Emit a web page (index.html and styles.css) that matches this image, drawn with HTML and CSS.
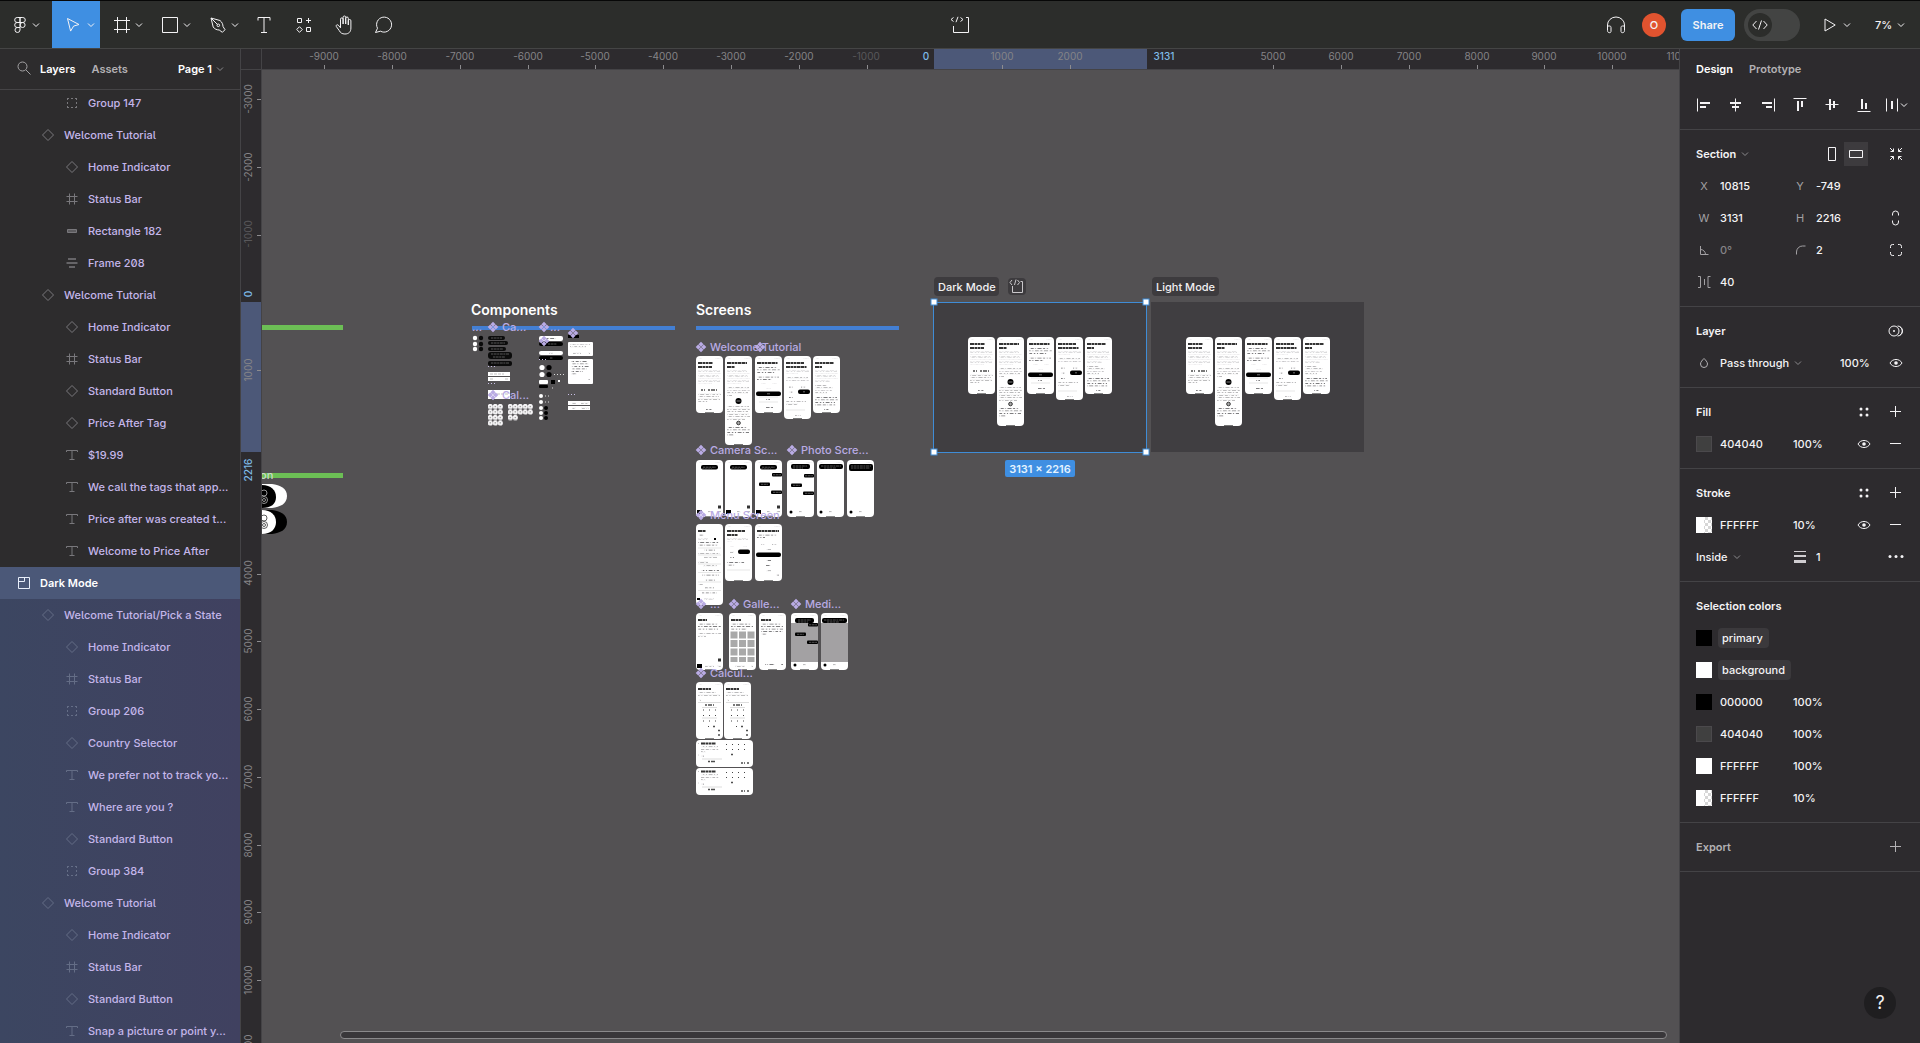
FILE: index.html
```html
<!DOCTYPE html>
<html lang="en">
<head>
<meta charset="utf-8">
<title>Price After – design file</title>
<link rel="stylesheet" href="styles.css">
</head>
<body>
<svg class="sprite" aria-hidden="true">
  <defs>
    <symbol id="chevron" viewBox="0 0 8 8"><path d="M1 2.5l3 3 3-3"/></symbol>
    <symbol id="figma" viewBox="0 0 16 20"><path d="M8 2.500H5.200a2.500 2.500 0 0 0 0 5H8zM8 2.500h2.800a2.500 2.500 0 0 1 0 5H8zM8 7.500H5.200a2.500 2.500 0 0 0 0 5H8zM8 12.500H5.200a2.500 2.500 0 1 0 2.800 2.500z"/><circle cx="10.600" cy="10" r="2.500"/></symbol>
    <symbol id="move" viewBox="0 0 16 16"><path d="M1.500 1.500l11.500 6-5.400 1.600-3 5z"/></symbol>
    <symbol id="frame" viewBox="0 0 16 16"><path d="M3.500 0v16M12.500 0v16M0 3.500h16M0 12.500h16"/></symbol>
    <symbol id="rect" viewBox="0 0 16 16"><path d="M.5.5h15v15H.5z"/></symbol>
    <symbol id="pen" viewBox="0 0 16 16"><path d="M1 1l9 2.500c2 1.500 3 4 3 6l2 3.200-2.600 2.600L9.200 13c-2.500 0-4.800-1.200-6-3zM1 1l6.500 6.500"/><circle cx="8.300" cy="8.300" r="1.300"/></symbol>
    <symbol id="text" viewBox="0 0 16 18"><path d="M2 4.500V1.500h12v3M8 1.500v15M5 16.500h6"/></symbol>
    <symbol id="resources" viewBox="0 0 16 16"><path d="M1.500 1.500h4v4h-4zM10.500 10.500h4v4h-4zM12.500 1v5M10 3.500h5M3.500 9.700l2.800 2.800-2.800 2.800L.7 12.500z"/></symbol>
    <symbol id="hand" viewBox="0 0 18 20"><path d="M5.500 11V4.200a1.300 1.300 0 0 1 2.600 0V9V2.300a1.300 1.300 0 0 1 2.600 0V9V3.300a1.300 1.300 0 0 1 2.600 0V10V5.800a1.300 1.300 0 0 1 2.600 0V13c0 4-2.300 6-6 6-3 0-4.500-1.200-5.700-3.500L1.300 11.500c-.6-1.500 1-2.300 2-1.300L5.500 12.800z"/></symbol>
    <symbol id="comment" viewBox="0 0 18 18"><path d="M.5 16.500l2-4.300a7.500 7.500 0 1 1 3 3z"/></symbol>
    <symbol id="devbox" viewBox="0 0 20 18"><path d="M3.500 10v6.500h15v-15H16M3.500 1.500l-2.500 2 2.500 2M10.500 1.500l2.500 2-2.500 2M8 .8L6 6.200"/></symbol>
    <symbol id="headphones" viewBox="0 0 20 18"><path d="M1.500 10.500V9a8.500 8 0 0 1 17 0v1.500M1.500 10h2c1 0 1.500.5 1.500 1.500v3.700c0 1-.5 1.500-1.300 1.500-1.400 0-2.200-.8-2.200-2.200zM18.500 10h-2c-1 0-1.500.5-1.500 1.500v3.700c0 1 .5 1.500 1.300 1.500 1.400 0 2.200-.8 2.200-2.200z"/></symbol>
    <symbol id="code" viewBox="0 0 16 10"><path d="M4.500 1L.8 5l3.700 4M11.500 1l3.700 4-3.700 4M9.500.5l-3 9"/></symbol>
    <symbol id="play" viewBox="0 0 12 14"><path d="M1 1l10.200 6L1 13z"/></symbol>
    <symbol id="search" viewBox="0 0 14 14"><circle cx="5.500" cy="5.500" r="4.500"/><path d="M9 9l4.500 4.500"/></symbol>
    <symbol id="l-group" viewBox="0 0 16 16"><path stroke-dasharray="2 2" d="M3 3.500h11M3 12.500h11M3.500 3v11M12.500 3v11"/></symbol>
    <symbol id="l-diamond" viewBox="0 0 16 16"><path d="M8 2.500L13.500 8 8 13.500 2.500 8z"/></symbol>
    <symbol id="l-frame" viewBox="0 0 16 16"><path d="M5.500 2.500v11M10.500 2.500v11M2.500 5.500h11M2.500 10.500h11"/></symbol>
    <symbol id="l-rect" viewBox="0 0 16 16"><path fill="#5c5b5e" d="M3.500 6.500h9v3h-9z"/></symbol>
    <symbol id="l-auto" viewBox="0 0 16 16"><path stroke-width="1.500" d="M4 4h8M2.500 8h11M5 12h6"/></symbol>
    <symbol id="l-text" viewBox="0 0 16 16"><path d="M2.500 5V3.500h11V5M8 3.500v9M5.500 12.500h5"/></symbol>
    <symbol id="l-section" viewBox="0 0 16 16"><path d="M2.500 2.500h11v11h-11zM8.500 2.500v4h-6"/></symbol>
    <symbol id="a-left" viewBox="0 0 16 16"><path d="M1.500 1.500v13"/><path stroke-width="2" d="M4 6h10M4 10h6"/></symbol>
    <symbol id="a-hc" viewBox="0 0 16 16"><path d="M7.500 1.500v13"/><path stroke-width="2" d="M2 6h11M4 10h7"/></symbol>
    <symbol id="a-right" viewBox="0 0 16 16"><path d="M14.500 1.500v13"/><path stroke-width="2" d="M2 6h10M6 10h6"/></symbol>
    <symbol id="a-top" viewBox="0 0 16 16"><path d="M1.500 1.500h13"/><path stroke-width="2" d="M6 4v10M10 4v6"/></symbol>
    <symbol id="a-vc" viewBox="0 0 16 16"><path d="M1.500 7.500h13"/><path stroke-width="2" d="M6 2v11M10 4v7"/></symbol>
    <symbol id="a-bottom" viewBox="0 0 16 16"><path d="M1.500 14.500h13"/><path stroke-width="2" d="M6 2v10M10 6v6"/></symbol>
    <symbol id="a-dist" viewBox="0 0 14 16"><path d="M1.500 1.500v13M12.500 1.500v13"/><path stroke-width="2" d="M7 4v8"/></symbol>
    <symbol id="portrait" viewBox="0 0 16 16"><path d="M4.500 1.500h7v13h-7z"/></symbol>
    <symbol id="landscape" viewBox="0 0 16 16"><path d="M1.500 4.500h13v7h-13z"/></symbol>
    <symbol id="collapse" viewBox="0 0 16 16"><path d="M2 2l3.500 3.500M2.500 5.500h3v-3M14 2l-3.500 3.500M13.500 5.500h-3v-3M2 14l3.500-3.500M2.500 10.500h3v3M14 14l-3.500-3.500M13.500 10.500h-3v3"/></symbol>
    <symbol id="link" viewBox="0 0 16 16"><path d="M4.500 5.500V4a3 3 0 0 1 6 0v1.500M4.500 10.500V12a3 3 0 0 0 6 0v-1.500"/></symbol>
    <symbol id="corners" viewBox="0 0 16 16"><path d="M2.500 6V4.500a2 2 0 0 1 2-2H6M10 2.500h1.500a2 2 0 0 1 2 2V6M13.500 10v1.500a2 2 0 0 1-2 2H10M6 13.500H4.500a2 2 0 0 1-2-2V10"/></symbol>
    <symbol id="angle" viewBox="0 0 16 16"><path d="M4.500 4v8.500h8M4.500 7.500a5 5 0 0 1 5 5"/></symbol>
    <symbol id="radius" viewBox="0 0 16 16"><path d="M4.500 12.500V10a6 6 0 0 1 6-6h3"/></symbol>
    <symbol id="spacing" viewBox="0 0 16 16"><path d="M2 2.500h2.500v11H2M14.500 2.500H12v11h2.500M8.500 5v6"/></symbol>
    <symbol id="mask" viewBox="0 0 16 16"><circle cx="6" cy="8" r="5"/><path d="M9.500 3a5 5 0 0 1 0 10M11.500 3.500a5 5 0 0 1 0 9"/><circle class="solid" cx="6" cy="8" r="1"/></symbol>
    <symbol id="drop" viewBox="0 0 16 16"><path d="M8 3.500C6.500 5 4.500 7 4.500 9a3.500 3.500 0 0 0 7 0c0-2-2-4-3.500-5.500z"/></symbol>
    <symbol id="eye" viewBox="0 0 16 16"><path d="M2 8c2.500-4.700 9.500-4.700 12 0-2.500 4.700-9.500 4.700-12 0z"/><circle class="solid" cx="8" cy="8" r="1.800"/></symbol>
    <symbol id="styles" viewBox="0 0 16 16"><g class="solid"><circle cx="5" cy="5" r="1.500"/><circle cx="11" cy="5" r="1.500"/><circle cx="5" cy="11" r="1.500"/><circle cx="11" cy="11" r="1.500"/></g></symbol>
    <symbol id="plus" viewBox="0 0 16 16"><path d="M7.500 2v11M2 7.500h11"/></symbol>
    <symbol id="minus" viewBox="0 0 16 16"><path d="M2 7.500h11"/></symbol>
    <symbol id="weight" viewBox="0 0 16 16"><path d="M2 2.500h12"/><path stroke-width="2" d="M2 7h12"/><path stroke-width="3" d="M2 12.500h12"/></symbol>
    <symbol id="more" viewBox="0 0 16 16"><g class="solid"><circle cx="2" cy="7.500" r="1.500"/><circle cx="8" cy="7.500" r="1.500"/><circle cx="14" cy="7.500" r="1.500"/></g></symbol>

    <!-- rows of word-sized marks, used as paint for miniature copy -->
    <pattern id="prose" width="26" height="10" patternUnits="userSpaceOnUse">
      <g fill="#5f5e61"><path d="M0 0h2.500v2.500H0zM3.200 0h4v2.500h-4zM7.900 0h1.500v2.500H7.900zM10 0h5v2.500h-5zM15.600 0h3v2.500h-3zM19.200 0h2v2.500h-2zM21.800 0h4v2.500h-4z"/><path d="M0 2.500h4.200V5H0zM4.900 2.500h2V5h-2zM7.500 2.500h4.700V5H7.500zM12.900 2.500h3V5h-3zM16.500 2.500h5V5h-5zM22.200 2.500h3V5h-3z"/><path d="M0 5h1.200v2.500H0zM1.900 5h3.700v2.500H1.900zM6.300 5h2.500v2.500H6.300zM9.500 5h2v2.500h-2zM12.200 5h4.800v2.500h-4.800zM17.600 5h2v2.500h-2zM20.300 5h5.200v2.500h-5.200z"/><path d="M0 7.500h3V10H0zM3.700 7.500h5V10h-5zM9.300 7.500h4V10h-4zM14 7.500h1.300V10H14zM16 7.500h3.500V10H16zM20.100 7.500h2.500V10h-2.500zM23.300 7.500h2V10h-2z"/></g>
    </pattern>
    <g id="comp"><path fill="#b9abe4" d="M5-.3l2.500 2.500L5 4.700 2.500 2.200zM5 5.300l2.500 2.500L5 10.300 2.500 7.800zM2.200 2.500L4.700 5 2.200 7.500-.3 5zM7.800 2.500L10.300 5 7.800 7.500 5.300 5z"/></g>
    <g id="base"><rect width="27" height="57" rx="4" fill="#fff"/><path class="gk" d="M3 2.500h3M19 2.500h6"/><path stroke="#888" d="M9 56.500h9"/></g>
    <g id="s-welcome"><use href="#base"/><path class="hd" d="M2 7h15M2 11h14"/><path class="gk" d="M2 15h22M2 17.500h23M2 20h21M2 22.500h23M2 25h22M2 27.500h14M2 38h23M2 40.500h21M2 43h22M2 45.500h10M10 53.500h6"/><path class="dk" d="M5 34h4M12 34h9"/></g>
    <g id="s-how"><rect width="27" height="89" rx="4" fill="#fff"/><path class="hd" d="M2 7h20M2 11h8"/><path class="gk" d="M3 2.500h3M19 2.500h6M2 15h20M2 17.500h23M2 20h21M2 22.500h23M2 25h22M2 27.500h14M2 32h22M2 34.500h23M2 37h21M2 39.500h5M2 50.500h22M2 53h23M2 55.500h21M2 58h22M2 60.500h23M2 63h18M2 71.500h20M2 74h23M2 76.500h22M2 79h7"/><circle cx="13.500" cy="45" r="3"/><circle cx="13.500" cy="67" r="1.800" fill="#aaa" stroke="#333"/><path stroke="#bbb" stroke-width=".7" d="M11.500 45h4"/><path stroke="#777" d="M9 88.500h9"/></g>
    <g id="s-where"><use href="#base"/><path class="hd" d="M2 7h21"/><path class="gk" d="M2 11.500h20M2 14h23M2 16.500h18M2 21h22M2 23.500h15M6 27.500h5M17 27.500h5M11 32.500h5M11 43.500h4M11 51.500h7"/><path stroke="#ccc" stroke-width=".5" d="M4 41h19M4 46h19"/><rect x="1" y="35.500" width="25" height="4.500" rx="2"/><path stroke="#999" stroke-width=".7" d="M12 37.800h3"/></g>
    <g id="s-tip"><rect width="27" height="63" rx="4" fill="#fff"/><path class="hd" d="M2 7h18M2 11h21"/><path class="gk" d="M3 2.500h3M19 2.500h6M2 15h23M2 17.500h12M2 22h22M2 24.500h23M5 31h4M17 31h5M5 36h4M5 41.500h4M2 45.500h20M2 48h12M11 59.500h6"/><path stroke="#ccc" stroke-width=".5" d="M2 54h19"/><rect x="14" y="33.500" width="12" height="4.500" rx="2"/><path stroke="#999" stroke-width=".7" d="M19 35.800h2"/><path stroke="#777" d="M9 62.500h9"/></g>
    <g id="s-ready"><use href="#base"/><path class="hd" d="M2 7h19M2 11h7"/><path class="gk" d="M2 15h22M2 17.500h23M2 20h21M2 22.500h23M2 25h15M2 29.500h12M2 32h18M2 34.500h17M2 37h12M2 41.500h22M2 44h23M2 46.500h20M2 49h21M11 53.500h5"/></g>
    <g id="s-cam"><use href="#base"/><rect x="5" y="5" width="17" height="4.500" rx="2"/><path class="lt" d="M7 7.200h13M6 9h10"/><path d="M1 50h5v4H1z"/><path class="gk" d="M12 52h4M21 52h4"/><path fill="#333" d="M22 45.500h3v3h-3z"/></g>
    <g id="s-photo"><use href="#base"/><circle cx="4" cy="52" r="1.500"/><path class="gk" d="M12 52h3"/></g>
    <g id="tags"><rect x="17" y="13" width="10" height="3.500" rx="1"/><rect x="4" y="22.500" width="11" height="3.500" rx="1"/><rect x="16" y="30.500" width="11" height="3.500" rx="1"/><path class="lt" d="M18 14.800h8M6 24.300h7M18 32.300h8"/></g>
    <g id="s-land"><rect width="57" height="27" rx="4" fill="#fff"/><path class="hd" d="M5 3.500h15"/><path class="gk" d="M5 7h17M5 9.500h18M5 12h5M5 16h3M2 3h1M2 15h1"/><path class="keys" d="M30 4.500h24M30 9.500h24"/><path class="dk" d="M12 21.500h8M35 14.500h2M45 23h4M51 23h3"/><path stroke="#bbb" stroke-width=".5" d="M6 19h20"/></g>
    <g id="s-calc"><use href="#base"/><path class="hd" d="M2 7h13"/><path class="gk" d="M2 10.500h18M2 13h22M3 18h2"/><path class="keys" d="M7 28h14M7 33.500h14M7 39h14M12 44.500h2"/><path stroke="#bbb" stroke-width=".5" d="M2 20.500h23M6 25.500h15M6 36h15"/><path class="dk" d="M9 23h9M17 44.500h2M22 48.500h3M22 53h3"/></g>
    <g id="flow"><use href="#s-welcome"/><use href="#s-how" x="29"/><use href="#s-where" x="59"/><use href="#s-tip" x="88"/><use href="#s-ready" x="117"/></g>
    <pattern id="dots" width="5" height="5.500" patternUnits="userSpaceOnUse"><circle cx="2.300" cy="2.500" r="2.100" fill="#fff"/><path stroke="#555" stroke-width=".8" d="M1.500 2.500h1.600"/></pattern>
  </defs>
</svg>

<div class="app">
  <header class="toolbar">
    <nav class="tools" aria-label="Tools">
      <button class="tool menu" aria-label="Main menu"><svg class="i16x20"><use href="#figma"/></svg><svg class="chev"><use href="#chevron"/></svg></button>
      <button class="tool split active" aria-label="Move"><svg class="i16"><use href="#move"/></svg><svg class="chev"><use href="#chevron"/></svg></button>
      <button class="tool split" aria-label="Frame"><svg class="i16"><use href="#frame"/></svg><svg class="chev"><use href="#chevron"/></svg></button>
      <button class="tool split" aria-label="Rectangle"><svg class="i16"><use href="#rect"/></svg><svg class="chev"><use href="#chevron"/></svg></button>
      <button class="tool split" aria-label="Pen"><svg class="i16"><use href="#pen"/></svg><svg class="chev"><use href="#chevron"/></svg></button>
      <button class="tool" aria-label="Text"><svg class="i16x18"><use href="#text"/></svg></button>
      <button class="tool" aria-label="Resources"><svg class="i16"><use href="#resources"/></svg></button>
      <button class="tool" aria-label="Hand"><svg class="i18x20"><use href="#hand"/></svg></button>
      <button class="tool" aria-label="Comment"><svg class="i18"><use href="#comment"/></svg></button>
    </nav>
    <button class="tool dev" aria-label="Ready for dev"><svg class="i20x18"><use href="#devbox"/></svg></button>
    <div class="actions">
      <button class="tool audio" aria-label="Audio"><svg class="i20x18"><use href="#headphones"/></svg></button>
      <span class="avatar">O</span>
      <button class="share">Share</button>
      <label class="switch"><input type="checkbox" aria-label="Dev Mode"><span class="knob"><svg class="i16x10"><use href="#code"/></svg></span></label>
      <button class="tool present" aria-label="Present"><svg class="i12x14"><use href="#play"/></svg><svg class="chev"><use href="#chevron"/></svg></button>
      <button class="tool zoom">7%<svg class="chev"><use href="#chevron"/></svg></button>
    </div>
  </header>

  <aside class="layers">
    <div class="layers-head">
      <button class="find" aria-label="Find"><svg class="i14"><use href="#search"/></svg></button>
      <button class="tab on">Layers</button>
      <button class="tab">Assets</button>
      <button class="tab on page">Page 1<svg class="chev dim"><use href="#chevron"/></svg></button>
    </div>
    <div class="scroll">
      <ul class="tree">
        <li class="d2"><svg><use href="#l-group"/></svg>Group 147</li>
        <li class="d1"><svg><use href="#l-diamond"/></svg>Welcome Tutorial</li>
        <li class="d2"><svg><use href="#l-diamond"/></svg>Home Indicator</li>
        <li class="d2"><svg><use href="#l-frame"/></svg>Status Bar</li>
        <li class="d2"><svg><use href="#l-rect"/></svg>Rectangle 182</li>
        <li class="d2"><svg><use href="#l-auto"/></svg>Frame 208</li>
        <li class="d1"><svg><use href="#l-diamond"/></svg>Welcome Tutorial</li>
        <li class="d2"><svg><use href="#l-diamond"/></svg>Home Indicator</li>
        <li class="d2"><svg><use href="#l-frame"/></svg>Status Bar</li>
        <li class="d2"><svg><use href="#l-diamond"/></svg>Standard Button</li>
        <li class="d2"><svg><use href="#l-diamond"/></svg>Price After Tag</li>
        <li class="d2"><svg><use href="#l-text"/></svg>$19.99</li>
        <li class="d2"><svg><use href="#l-text"/></svg>We call the tags that app...</li>
        <li class="d2"><svg><use href="#l-text"/></svg>Price after was created t...</li>
        <li class="d2"><svg><use href="#l-text"/></svg>Welcome to Price After</li>
        <li class="d0"><svg><use href="#l-section"/></svg>Dark Mode</li>
        <li class="d1 in"><svg><use href="#l-diamond"/></svg>Welcome Tutorial/Pick a State</li>
        <li class="d2 in"><svg><use href="#l-diamond"/></svg>Home Indicator</li>
        <li class="d2 in"><svg><use href="#l-frame"/></svg>Status Bar</li>
        <li class="d2 in"><svg><use href="#l-group"/></svg>Group 206</li>
        <li class="d2 in"><svg><use href="#l-diamond"/></svg>Country Selector</li>
        <li class="d2 in"><svg><use href="#l-text"/></svg>We prefer not to track yo...</li>
        <li class="d2 in"><svg><use href="#l-text"/></svg>Where are you ?</li>
        <li class="d2 in"><svg><use href="#l-diamond"/></svg>Standard Button</li>
        <li class="d2 in"><svg><use href="#l-group"/></svg>Group 384</li>
        <li class="d1 in"><svg><use href="#l-diamond"/></svg>Welcome Tutorial</li>
        <li class="d2 in"><svg><use href="#l-diamond"/></svg>Home Indicator</li>
        <li class="d2 in"><svg><use href="#l-frame"/></svg>Status Bar</li>
        <li class="d2 in"><svg><use href="#l-diamond"/></svg>Standard Button</li>
        <li class="d2 in"><svg><use href="#l-text"/></svg>Snap a picture or point y...</li>
      </ul>
    </div>
  </aside>

  <main class="stage">
    <div class="corner"></div>
    <svg class="ruler-x">
      <rect class="band" x="672" width="213" height="20"/>
      <g class="ticks"><path d="M62.500 16v4M130.500 16v4M198.500 16v4M266.500 16v4M333.500 16v4M401.500 16v4M469.500 16v4M537.500 16v4M605.500 16v4M740.500 16v4M808.500 16v4M1011.500 16v4M1079.500 16v4M1147.500 16v4M1215.500 16v4M1282.500 16v4M1350.500 16v4"/></g>
      <g class="nums">
        <text x="62" y="11">-9000</text><text x="130" y="11">-8000</text><text x="198" y="11">-7000</text><text x="266" y="11">-6000</text><text x="333" y="11">-5000</text><text x="401" y="11">-4000</text><text x="469" y="11">-3000</text><text x="537" y="11">-2000</text><text class="faint" x="604" y="11">-1000</text>
        <text class="sel" x="664" y="11">0</text><text x="740" y="11">1000</text><text x="808" y="11">2000</text><text class="sel" x="902" y="11">3131</text>
        <text x="1011" y="11">5000</text><text x="1079" y="11">6000</text><text x="1147" y="11">7000</text><text x="1215" y="11">8000</text><text x="1282" y="11">9000</text><text x="1350" y="11">10000</text><text x="1418" y="11">11000</text>
      </g>
    </svg>
    <svg class="ruler-y">
      <rect class="band" y="232" width="20" height="150"/>
      <g class="ticks"><path d="M16 29.500h4M16 97.500h4M16 165.500h4M16 300.500h4M16 504.500h4M16 571.500h4M16 639.500h4M16 707.500h4M16 775.500h4M16 842.500h4M16 910.500h4"/></g>
      <g class="nums">
        <text transform="translate(11 29) rotate(-90)">-3000</text><text transform="translate(11 97) rotate(-90)">-2000</text><text class="faint" transform="translate(11 164) rotate(-90)">-1000</text>
        <text class="sel" transform="translate(11 224) rotate(-90)">0</text><text transform="translate(11 300) rotate(-90)">1000</text><text class="sel" transform="translate(11 400) rotate(-90)">2216</text>
        <text transform="translate(11 503) rotate(-90)">4000</text><text transform="translate(11 571) rotate(-90)">5000</text><text transform="translate(11 639) rotate(-90)">6000</text><text transform="translate(11 707) rotate(-90)">7000</text><text transform="translate(11 775) rotate(-90)">8000</text><text transform="translate(11 842) rotate(-90)">9000</text><text transform="translate(11 910) rotate(-90)">10000</text><text transform="translate(11 978) rotate(-90)">11000</text>
      </g>
    </svg>
    <div class="canvas">
      <svg class="world">
        <g transform="translate(-262 -70)">
          <path fill="#6cbf55" d="M262 325h81v5h-81zM262 473h81v5h-81z"/>
          <text class="name pale" x="260" y="479">on</text>
          <g>
            <path fill="#fff" d="M262 484h10c8 1 15 4 15 12s-7 11-15 12h-10z"/><path d="M262 485c9 0 14 5 14 12s-5 11-14 11z"/>
            <path d="M262 510h10c8 1 15 4 15 12s-7 11-15 12h-10z"/><path fill="#fff" d="M262 510c9 0 14 5 14 12s-5 12-14 12z"/>
            <g fill="none" stroke="#bbb" stroke-width=".8"><circle cx="264" cy="493" r="3"/><circle cx="264" cy="500" r="3.500"/><circle cx="264" cy="500" r="1.500"/></g>
            <g fill="none" stroke="#333" stroke-width=".8"><circle cx="264" cy="518" r="3"/><circle cx="264" cy="525" r="3.500"/><circle cx="264" cy="525" r="1.500"/></g>
          </g>

          <text class="title" x="471" y="315">Components</text>
          <text class="title" x="696" y="315">Screens</text>
          <path fill="#437fd3" d="M472 326h203v4H472zM696 326h203v4H696z"/>

          <!-- component sheet -->
          <g>
            <g fill="#fff"><circle cx="475" cy="338" r="2.200"/><circle cx="475" cy="344" r="2.200"/><circle cx="475" cy="349" r="2.200"/></g>
            <g fill="#0b0b0b"><circle cx="481" cy="338" r="2.200"/><circle cx="481" cy="344" r="2.200"/><circle cx="481" cy="349" r="2.200"/>
            <rect x="488" y="336" width="17" height="4" rx="2"/><rect x="488" y="341" width="20" height="4" rx="2"/><rect x="488" y="347" width="18" height="4" rx="2"/><rect x="488" y="352" width="24" height="7" rx="3"/><rect x="488" y="361" width="24" height="5" rx="2"/></g>
            <path class="lt" d="M491 338h11M491 343h14M491 349h12M491 354h18M493 357h12M491 363h18"/>
            <path fill="#fff" d="M488 372h22v4h-22zM488 377h22v4h-22zM488 390h22v9h-22z"/>
            <path stroke="#999" stroke-width=".6" stroke-dasharray="3 1" d="M490 374h14M490 379h3M505 379h3M489 394h20"/>
            <g transform="translate(488 404)"><path fill="url(#dots)" d="M0 0h15v22H0zM20 0h25v11H20zM20 11h10v5.500H20z"/></g>
            <rect x="539" y="336" width="24" height="5" rx="2" fill="#fff"/><rect x="539" y="342" width="24" height="4" rx="2"/><rect x="539" y="351" width="24" height="4" rx="2" fill="#fff"/><rect x="539" y="356" width="24" height="4" rx="2"/>
            <path class="gk" d="M546 338.500h10M549 353h4"/><path class="lt" d="M548 344h9M550 358h3"/>
            <g fill="#fff"><circle cx="542" cy="367.500" r="2.600"/><circle cx="542" cy="374.500" r="2.600"/><rect x="539" y="380" width="9" height="4" rx="1"/><rect x="558" y="380" width="2" height="2"/><circle cx="541" cy="396" r="2"/><circle cx="541" cy="402" r="2"/><circle cx="541" cy="408" r="2"/><circle cx="541" cy="413" r="2"/><circle cx="541" cy="418" r="2"/></g>
            <circle cx="549" cy="367.500" r="2.600"/><circle cx="549" cy="374.500" r="2.600"/><rect x="539" y="385" width="9" height="3" rx="1"/><rect x="551" y="380" width="4" height="4"/><circle cx="546" cy="408" r="2"/><circle cx="546" cy="413" r="2"/><circle cx="546" cy="418" r="2"/>
            <path stroke="#ddd" stroke-dasharray="1 2" d="M554 374.500h12M545 396h4M545 402h4M552 388h2"/>
            <rect x="568" y="335" width="11" height="3"/>
            <rect x="568" y="342" width="25" height="14" rx="1" fill="#fff"/><rect x="568" y="359" width="25" height="25" rx="1" fill="#fff"/><path fill="#fff" d="M568 401h22v4h-22zM568 406h22v4h-22z"/>
            <path class="gk" d="M570 344.500h20M570 347h16M573 353h8M588 353h2M571 361.500h16M572 364h17M571 366.500h18M572 369h15M571 371.500h12M571 374h6M588 379.500h2M572 403h4M581 403h8M572 408h4M581 408h8"/>
          </g>

          <!-- screen rows -->
          <use href="#flow" x="696" y="356"/>
          <use href="#s-cam" x="696" y="460"/><use href="#s-cam" x="725" y="460"/><use href="#s-cam" x="755" y="460"/><use href="#tags" x="755" y="460"/>
          <use href="#s-photo" x="787" y="460"/><rect x="791" y="464" width="19" height="5" rx="2"/><use href="#tags" x="787" y="461"/>
          <use href="#s-photo" x="817" y="460"/><rect x="819" y="464" width="24" height="5" rx="2"/>
          <use href="#s-photo" x="847" y="460"/><rect x="849" y="464" width="24" height="7" rx="2"/>
          <path class="lt" d="M793 466h14M793 468h10M821 466h20M824 468h12M851 466h20M851 468h19"/>

          <g transform="translate(696 524)"><rect width="27" height="81" rx="4" fill="#fff"/><path class="hd" d="M2 7h8"/><path class="gk" d="M3 11h5M8 26h11M8 33h13M7 42h14M5 46.500h18M6 51h17M9 56h10M9 64h9M6 69h15M8 75h10M2 15h10M2 18.500h21M2 21h20M2 29.500h22M2 38h10M2 60.500h5"/><path d="M18 14h2v2h-2zM1 74h3v2H1z"/><path stroke="#ccc" stroke-width=".5" d="M2 24h23M2 31h23M2 40h23M2 48.500h23M2 58h23M2 66.500h23"/></g>
          <g transform="translate(725 524)"><use href="#base"/><path class="hd" d="M2 7h18M2 11h11"/><path class="gk" d="M2 15h21M2 17.500h5M5 22.500h4M18 22.500h4M5 28h4M5 33.500h4M2 38.500h18M2 41h8"/><rect x="13" y="25.500" width="12" height="4.500" rx="2"/><path stroke="#ccc" stroke-width=".5" d="M2 46h23"/></g>
          <g transform="translate(755 524)"><use href="#base"/><path class="hd" d="M2 7h22"/><path class="gk" d="M2 11h20M2 13.500h8M6 20.500h4M17 20.500h5M11 25.500h5M11 36.500h5M11 41.500h5M11 47h5M21 51h3"/><rect x="1" y="28.500" width="25" height="4.500" rx="2"/></g>

          <g transform="translate(696 613)"><use href="#base"/><path class="hd" d="M2 7h9"/><path class="gk" d="M2 11h20M2 13.500h23M2 16h20M2 20.500h23M2 23h8M9 53h9M21 53h4"/><path d="M1 51h5v4H1z"/><path fill="#333" d="M22 45.500h3v3h-3z"/></g>
          <g transform="translate(729 613)"><use href="#base"/><path class="hd" d="M2 7h10"/><path class="gk" d="M2 11h20M2 13.500h22M2 16h16M6 53h10M22 53h2"/><path fill="#a9a9a9" d="M1.500 18.500h7v7h-7zM10 18.500h7v7h-7zM18.500 18.500h7v7h-7zM1.500 27h7v7h-7zM10 27h7v7h-7zM18.500 27h7v7h-7zM1.500 35.500h7v7h-7zM10 35.500h7v7h-7zM18.500 35.500h7v7h-7zM1.500 44h7v5h-7zM10 44h7v5h-7zM18.500 44h7v5h-7z"/></g>
          <g transform="translate(759 613)"><use href="#base"/><path class="hd" d="M2 7h10"/><path class="gk" d="M2 11h20M2 13.500h22M2 16h22M2 18.500h22M2 21h6M6 51.500h10M22 51.500h2"/></g>
          <g transform="translate(791 613)"><use href="#s-photo"/><path fill="#a3a1a3" d="M0 10h27v39H0z"/><rect x="4" y="5" width="19" height="5" rx="2"/><path class="lt" d="M7 7h13M7 9h10"/><use href="#tags" y="-3"/></g>
          <g transform="translate(821 613)"><use href="#s-photo"/><path fill="#a3a1a3" d="M0 10h27v39H0z"/><rect x="1" y="5" width="25" height="5" rx="2"/><path class="lt" d="M3 7h20M6 9h12"/></g>
          <use href="#s-calc" x="696" y="682"/><use href="#s-calc" x="724" y="682"/>
          <use href="#s-land" x="696" y="740"/><use href="#s-land" x="696" y="768"/>

          <!-- component set names -->
          <g class="name">
            <text x="472" y="331">...</text>
            <use href="#comp" x="488" y="322"/><text x="502" y="331">Ca...</text>
            <use href="#comp" x="539" y="322"/><text x="550" y="331">...</text>
            <use href="#comp" x="539" y="336"/><use href="#comp" x="568" y="328"/>
            <use href="#comp" x="488" y="390"/><text x="502" y="399">Cal...</text>
            <use href="#comp" x="696" y="342"/><use href="#comp" x="755" y="342"/><text x="710" y="351">Welcome Tutorial</text>
            <use href="#comp" x="696" y="445"/><text x="710" y="454">Camera Sc...</text>
            <use href="#comp" x="787" y="445"/><text x="801" y="454">Photo Scre...</text>
            <use href="#comp" x="696" y="510"/><text x="710" y="519">Menu Screen</text>
            <use href="#comp" x="696" y="599"/><text x="710" y="608">...</text>
            <use href="#comp" x="729" y="599"/><text x="743" y="608">Galle...</text>
            <use href="#comp" x="791" y="599"/><text x="805" y="608">Medi...</text>
            <use href="#comp" x="696" y="668"/><text x="710" y="677">Calcul...</text>
          </g>
          <path stroke="#c9bfe6" stroke-dasharray="1 2" d="M488 366.500h7M488 383.500h7M539 359.500h7M568 394.500h7"/>

          <!-- sections -->
          <rect x="934" y="302" width="213" height="150" fill="#403e41"/>
          <rect x="1151" y="302" width="213" height="150" fill="#403e41"/>
          <use href="#flow" x="968" y="337"/><use href="#flow" x="1186" y="337"/>
          <g class="pill"><rect x="934" y="277" width="65" height="19" rx="4"/><rect x="1008" y="278" width="18" height="17" rx="4"/><rect x="1152" y="277" width="67" height="19" rx="4"/></g>
          <g class="secname"><text x="938" y="291">Dark Mode</text><text x="1156" y="291">Light Mode</text></g>
          <path fill="none" stroke="#c9c7ca" d="M1012.500 286v6.500h10v-11h-2M1012 280l-2 2.500 2 2.500M1017.500 280l2 2.500-2 2.500M1016 279.500l-1.500 5.500"/>
          <rect class="selbox" x="933.500" y="302.500" width="213" height="150"/>
          <g class="handle"><rect x="931" y="299" width="6" height="6"/><rect x="1143" y="299" width="6" height="6"/><rect x="931" y="449" width="6" height="6"/><rect x="1143" y="449" width="6" height="6"/></g>
          <rect x="1005" y="460" width="70" height="17" rx="2" fill="#3f8fe2"/>
          <text class="size" x="1040" y="473">3131 × 2216</text>
        </g>
      </svg>
      <div class="hscroll"></div>
    </div>
  </main>

  <aside class="props">
    <section class="top">
      <div class="tabs"><button class="tab on">Design</button><button class="tab">Prototype</button></div>
      <div class="align">
        <button aria-label="Align left"><svg class="i16"><use href="#a-left"/></svg></button>
        <button aria-label="Align horizontal centers"><svg class="i16"><use href="#a-hc"/></svg></button>
        <button aria-label="Align right"><svg class="i16"><use href="#a-right"/></svg></button>
        <button aria-label="Align top"><svg class="i16"><use href="#a-top"/></svg></button>
        <button aria-label="Align vertical centers"><svg class="i16"><use href="#a-vc"/></svg></button>
        <button aria-label="Align bottom"><svg class="i16"><use href="#a-bottom"/></svg></button>
        <button class="last" aria-label="Distribute"><svg class="i14x16"><use href="#a-dist"/></svg><svg class="chev"><use href="#chevron"/></svg></button>
      </div>
    </section>

    <section>
      <div class="row head">
        <button class="h drop">Section<svg class="chev dim"><use href="#chevron"/></svg></button>
        <div class="orient"><button aria-label="Portrait"><svg class="i16"><use href="#portrait"/></svg></button><button class="on" aria-label="Landscape"><svg class="i16"><use href="#landscape"/></svg></button></div>
        <button class="ib" aria-label="Resize to fit"><svg class="i16"><use href="#collapse"/></svg></button>
      </div>
      <div class="row geo"><label for="fx">X</label><input id="fx" value="10815"><label for="fy">Y</label><input id="fy" value="-749"></div>
      <div class="row geo"><label for="fw">W</label><input id="fw" value="3131"><label for="fh">H</label><input id="fh" value="2216"><button class="ib" aria-label="Constrain proportions"><svg class="i16"><use href="#link"/></svg></button></div>
      <div class="row geo"><label for="fr" aria-label="Rotation"><svg class="i16"><use href="#angle"/></svg></label><input id="fr" class="off" value="0°"><label for="fc" aria-label="Corner radius"><svg class="i16"><use href="#radius"/></svg></label><input id="fc" value="2"><button class="ib" aria-label="Independent corners"><svg class="i16"><use href="#corners"/></svg></button></div>
      <div class="row geo"><label for="fs" aria-label="Spacing"><svg class="i16"><use href="#spacing"/></svg></label><input id="fs" value="40"></div>
    </section>

    <section>
      <div class="row head"><h2 class="h">Layer</h2><button class="ib" aria-label="Mask"><svg class="i16"><use href="#mask"/></svg></button></div>
      <div class="row blend"><svg class="i16 soft"><use href="#drop"/></svg><button class="drop">Pass through<svg class="chev dim"><use href="#chevron"/></svg></button><input aria-label="Opacity" value="100%"><button class="ib" aria-label="Hide layer"><svg class="i16"><use href="#eye"/></svg></button></div>
    </section>

    <section>
      <div class="row head"><h2 class="h">Fill</h2><button class="ib" aria-label="Fill styles"><svg class="i16"><use href="#styles"/></svg></button><button class="ib" aria-label="Add fill"><svg class="i16"><use href="#plus"/></svg></button></div>
      <div class="row paint"><span class="sw grey"></span><input aria-label="Fill color" value="404040"><input aria-label="Fill opacity" value="100%"><button class="ib" aria-label="Hide fill"><svg class="i16"><use href="#eye"/></svg></button><button class="ib" aria-label="Remove fill"><svg class="i16"><use href="#minus"/></svg></button></div>
    </section>

    <section>
      <div class="row head"><h2 class="h">Stroke</h2><button class="ib" aria-label="Stroke styles"><svg class="i16"><use href="#styles"/></svg></button><button class="ib" aria-label="Add stroke"><svg class="i16"><use href="#plus"/></svg></button></div>
      <div class="row paint"><span class="sw alpha"></span><input aria-label="Stroke color" value="FFFFFF"><input aria-label="Stroke opacity" value="10%"><button class="ib" aria-label="Hide stroke"><svg class="i16"><use href="#eye"/></svg></button><button class="ib" aria-label="Remove stroke"><svg class="i16"><use href="#minus"/></svg></button></div>
      <div class="row strokes"><button class="drop">Inside<svg class="chev dim"><use href="#chevron"/></svg></button><label for="sw" aria-label="Stroke weight"><svg class="i16"><use href="#weight"/></svg></label><input id="sw" value="1"><button class="ib" aria-label="Advanced stroke"><svg class="i16"><use href="#more"/></svg></button></div>
    </section>

    <section>
      <div class="row head"><h2 class="h">Selection colors</h2></div>
      <div class="row paint"><span class="sw black"></span><button class="token">primary</button></div>
      <div class="row paint"><span class="sw white"></span><button class="token">background</button></div>
      <div class="row paint"><span class="sw black"></span><input aria-label="Color 3" value="000000"><input aria-label="Opacity 3" value="100%"></div>
      <div class="row paint"><span class="sw grey"></span><input aria-label="Color 4" value="404040"><input aria-label="Opacity 4" value="100%"></div>
      <div class="row paint"><span class="sw white"></span><input aria-label="Color 5" value="FFFFFF"><input aria-label="Opacity 5" value="100%"></div>
      <div class="row paint"><span class="sw alpha"></span><input aria-label="Color 6" value="FFFFFF"><input aria-label="Opacity 6" value="10%"></div>
    </section>

    <section>
      <div class="row head"><h2 class="h muted">Export</h2><button class="ib muted" aria-label="Add export"><svg class="i16"><use href="#plus"/></svg></button></div>
    </section>
    <button class="help" aria-label="Help">?</button>
  </aside>
</div>
</body>
</html>
```
FILE: styles.css
```css
* { box-sizing: border-box; }
html, body { height: 100%; margin: 0; }
body {
  background: #2d2b2e;
  color: #f4f3f5;
  font: 500 11px/16px Inter, "Liberation Sans", sans-serif;
  overflow: hidden;
}
button, input { font: inherit; color: inherit; background: none; border: 0; padding: 0; margin: 0; }
input { width: 100%; min-width: 0; outline: 0; }
svg { fill: none; stroke: currentColor; flex: none; }
.solid { fill: currentColor; stroke: none; }
.sprite { position: absolute; width: 0; height: 0; }

.chev { width: 8px; height: 8px; }
.dim { color: #8b8a8d; }
.soft { color: #b3b1b4; }
.i12x14 { width: 12px; height: 14px; }
.i14 { width: 14px; height: 14px; }
.i14x16 { width: 14px; height: 16px; }
.i16 { width: 16px; height: 16px; }
.i16x10 { width: 16px; height: 10px; }
.i16x18 { width: 16px; height: 18px; }
.i16x20 { width: 16px; height: 20px; }
.i18 { width: 18px; height: 18px; }
.i18x20 { width: 18px; height: 20px; }
.i20x18 { width: 20px; height: 18px; }

.app {
  display: grid;
  grid-template: 49px minmax(0, 1fr) / 241px minmax(0, 1fr) 241px;
  height: 100vh;
}

/* toolbar */
.toolbar {
  grid-column: 1 / -1;
  display: grid;
  grid-template-columns: 1fr auto 1fr;
  background: #2c2d2b;
  border-top: 1px solid #070707;
  border-bottom: 1px solid #454545;
}
.tools, .actions { display: flex; align-items: center; }
.tools { align-items: stretch; }
.actions { justify-content: flex-end; }
.tool { display: flex; align-items: center; justify-content: center; width: 40px; }
.menu { width: 52px; justify-content: flex-start; padding-left: 12px; gap: 4px; }
.split { width: 48px; justify-content: flex-start; padding-left: 14px; gap: 5px; }
.active { background: #3f8fe2; }
.avatar {
  width: 24px; height: 24px; margin: 0 15px 0 6px; border-radius: 12px;
  background: #e1532f; text-align: center; line-height: 24px;
}
.share { width: 54px; height: 32px; border-radius: 6px; background: #3f8fe2; font-weight: 600; }
.switch {
  display: flex; align-items: center; width: 56px; height: 32px; margin-left: 9px;
  padding-left: 4px; border-radius: 16px; background: #434443;
}
.switch input { position: absolute; width: 1px; height: 1px; opacity: 0; }
.knob {
  display: flex; align-items: center; justify-content: center;
  width: 24px; height: 24px; border-radius: 12px; background: #2c2d2b;
}
.present { width: 64px; justify-content: flex-start; gap: 7px; padding-left: 24px; }
.zoom { width: 56px; justify-content: flex-start; gap: 5px; padding-left: 11px; }

/* layers */
.layers { display: flex; flex-direction: column; min-height: 0; border-right: 1px solid #444346; background: #2d2c2d; }
.layers-head { display: flex; align-items: center; flex: none; height: 41px; padding: 0 16px; border-bottom: 1px solid #454446; }
.find { width: 24px; height: 16px; text-align: left; padding-left: 1px; color: #a3a2a4; }
.tab { color: #b3b1b4; font-weight: 600; }
.tab.on { color: #fff; }
.tab + .tab { margin-left: 16px; }
.layers-head .page { display: flex; align-items: center; gap: 4px; margin-left: auto; }
.scroll { flex: 1; min-height: 0; overflow: hidden; }
.tree { list-style: none; margin: -3px 0 0; padding: 0; font-feature-settings: "ss02"; }
.tree li {
  display: flex; align-items: center; gap: 8px; height: 32px;
  color: #c4b6ea; white-space: nowrap;
}
.tree svg { width: 16px; height: 16px; color: #79787c; }
.tree .d0 { padding-left: 16px; background: #4b5878; color: #fff; font-weight: 600; }
.tree .d0 svg { color: #e8eefa; }
.tree .d1 { padding-left: 40px; }
.tree .d2 { padding-left: 64px; }
.tree .in { background: linear-gradient(90deg, #3c4661, #404160); }
.tree .in svg { color: #646d86; }

/* canvas and rulers */
.stage { display: grid; grid-template: 21px minmax(0, 1fr) / 21px minmax(0, 1fr); background: #2d2b2e; }
.corner, .ruler-x { border-bottom: 1px solid #444346; }
.corner, .ruler-y { border-right: 1px solid #444346; }
.ruler-x, .ruler-y { width: 100%; height: 100%; overflow: hidden; }
.band { fill: #4c5878; stroke: none; }
.ticks { stroke: #8d8c8f; }
.nums { fill: #858487; stroke: none; font-size: 10px; font-weight: 400; text-anchor: middle; }
.nums .faint { fill: #59585b; }
.nums .sel { fill: #7fbbe8; font-weight: 500; }
.canvas { position: relative; background: #535153; overflow: hidden; }
.world { display: block; width: 100%; height: 100%; fill: #000; stroke: none; }
.world text { stroke: none; }
.hd { stroke: #111; stroke-width: 2; stroke-dasharray: 4 .5 3 .5 2 .5; opacity: .85; }
.gk { stroke: url(#prose); stroke-width: 1; opacity: .8; }
.dk { stroke: #222; stroke-width: 1.5; stroke-dasharray: 2 1 4 1; opacity: .8; }
.lt { stroke: #8b8a8c; stroke-width: .6; stroke-dasharray: 2 .6 3 .6; }
.keys { stroke: #444; stroke-width: 1; stroke-dasharray: 1 5; }
.title { fill: #fff; font-size: 14px; font-weight: 600; }
.name { fill: #b9abe4; font-size: 11px; font-weight: 500; }
.pale { fill: #c9dcc8; }
.pill { fill: #3d3b3e; }
.secname { fill: #f1f0f2; }
.selbox { fill: none; stroke: #3f8cd6; }
.handle { fill: #fff; stroke: #3f8cd6; }
.size { fill: #e4f3ff; font-weight: 600; text-anchor: middle; }
.hscroll {
  position: absolute; left: 78px; right: 12px; bottom: 4px; height: 8px;
  border: 1px solid #8a898b; border-radius: 4px; background: #39373a;
}

/* properties */
.props { position: relative; border-left: 1px solid #444346; background: #2d2b2e; }
.props section { padding: 8px; border-bottom: 1px solid #444346; }
.props .top { padding: 0; }
.tabs { display: flex; align-items: center; height: 40px; padding-left: 16px; }
.align { display: flex; align-items: center; height: 40px; padding: 0 8px 8px 8px; }
.align button { display: flex; justify-content: center; width: 32px; }
.align .last { align-items: center; gap: 1px; }
.row { display: grid; align-items: center; height: 32px; }
.h { margin: 0; padding-left: 8px; font-size: 11px; font-weight: 600; }
.muted { color: #b3b1b4; }
.drop { display: flex; align-items: center; gap: 5px; }
.ib { display: flex; align-items: center; justify-content: center; width: 32px; height: 32px; }
.head { display: flex; }
.head .h { margin-right: auto; }
.orient { display: flex; margin-right: 12px; }
.orient button { display: flex; align-items: center; justify-content: center; width: 24px; height: 24px; }
.orient .on { background: #3d3b3e; }
.geo { grid-template-columns: 32px 64px 32px 64px 32px; }
.geo label { display: flex; justify-content: center; color: #a3a1a4; font-weight: 400; }
.off { color: #858487; }
.blend { grid-template-columns: 32px 120px 40px 32px; }
.blend > svg { justify-self: center; }
.paint { grid-template-columns: 32px 73px 55px 32px 32px; }
.strokes { grid-template-columns: 96px 32px 64px 32px; }
.strokes .drop { padding-left: 8px; }
.strokes label { display: flex; justify-content: center; color: #cfcdd0; }
.sw { justify-self: center; width: 16px; height: 16px; }
.black { background: #000; }
.white { background: #fff; }
.grey { background: #404040; border: 1px solid #4b494c; }
.alpha { background: linear-gradient(90deg, #fff 8px, transparent 8px), repeating-conic-gradient(#d6d6d6 0 25%, #fff 0 50%) 0 0 / 6px 6px; }
.token { justify-self: start; margin-left: -2px; height: 20px; padding: 0 6px 0 4px; border-radius: 4px; background: #3b393c; }
.help {
  position: absolute; right: 24px; bottom: 24px; width: 32px; height: 32px;
  border-radius: 16px; background: #1f1e20; font-size: 18px; font-weight: 400; line-height: 32px;
}
```
